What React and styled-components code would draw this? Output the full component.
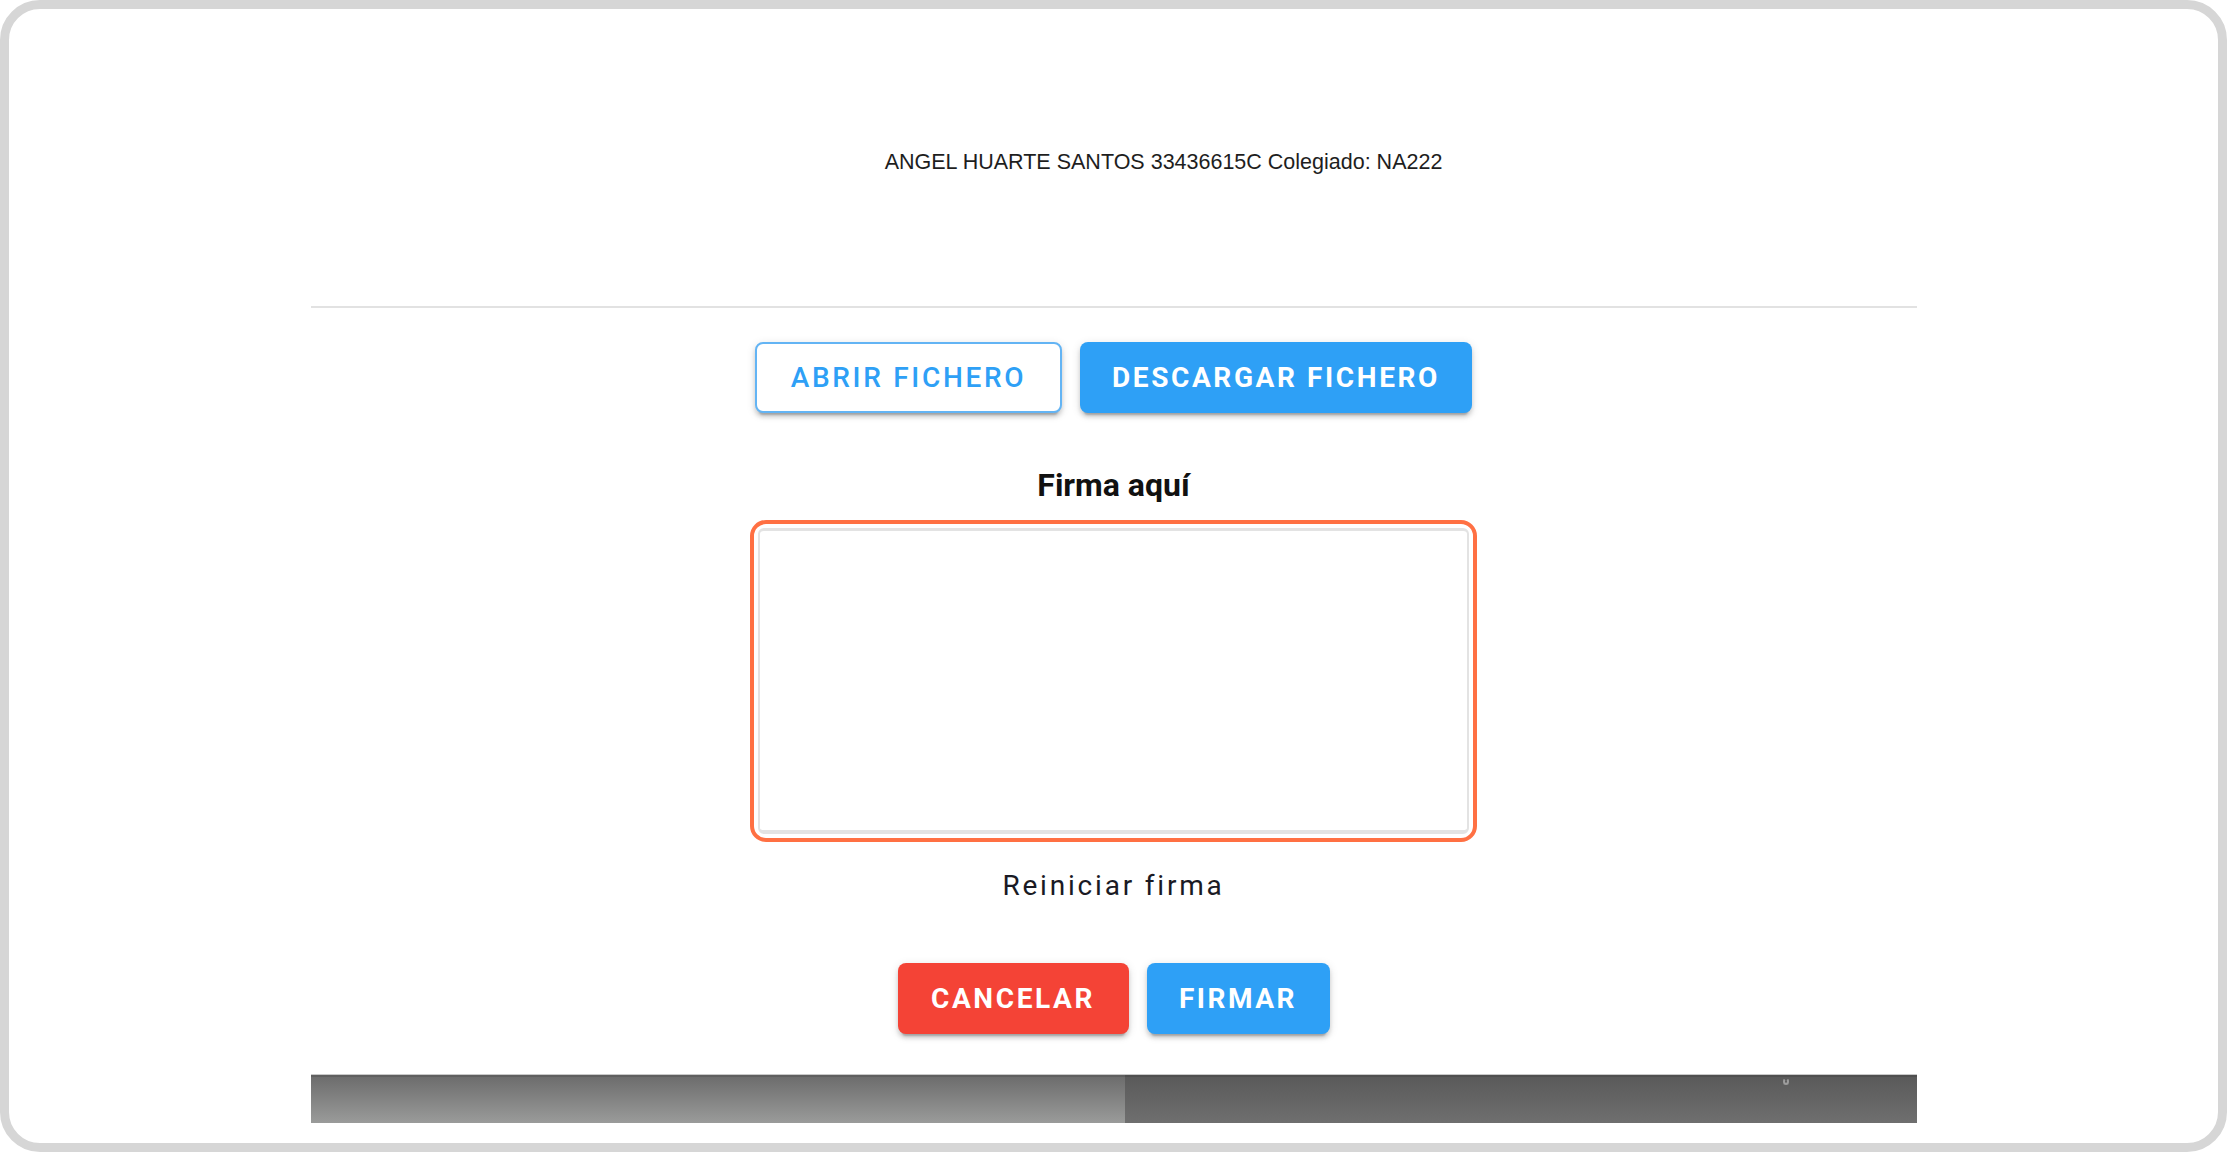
import styled, { createGlobalStyle, css } from 'styled-components'

const GlobalStyle = createGlobalStyle`
  html, body {
    margin: 0;
    padding: 0;
    background: #ffffff;
  }
  * {
    box-sizing: border-box;
  }
`

const Frame = styled('main')`
  height: 1152px;
  width: 2227px;
  border: 9px solid #d6d6d6;
  border-radius: 40px;
  background: #ffffff;
  overflow: hidden;
  display: flex;
  justify-content: center;
`

const Column = styled('section')`
  width: 1606px;
  display: flex;
  flex-direction: column;
  align-items: center;
`

const DocHeader = styled('header')`
  width: 100%;
  height: 299px;
  padding-top: 141px;
  padding-left: 100px;
  border-bottom: 2px solid #e2e2e2;
  text-align: center;
  font-family: 'Liberation Sans', Arial, sans-serif;
  font-size: 21.5px;
  line-height: 24px;
  color: #1e1e1e;
`

const ButtonRow = styled('div')`
  display: flex;
  justify-content: center;
  gap: 18px;
  margin-top: ${(p) => p.$top}px;
`

const palette = {
  blue: '#2ea0f6',
  red: '#f44336',
}

const Button = styled('button')`
  width: ${(p) => p.$width}px;
  height: 71px;
  padding: 0;
  border-radius: 8px;
  font-family: Roboto, 'Noto Sans', sans-serif;
  font-size: 28px;
  font-weight: ${(p) => p.$weight || 700};
  letter-spacing: ${(p) => p.$spacing || 2.4}px;
  text-transform: uppercase;
  cursor: pointer;
  box-shadow: 0 6px 2px -4px rgba(0, 0, 0, 0.2), 0 4px 4px 0 rgba(0, 0, 0, 0.14),
    0 2px 10px 0 rgba(0, 0, 0, 0.12);

  ${(p) =>
    p.$variant === 'outlined'
      ? css`
          background: #ffffff;
          color: ${palette.blue};
          border: 2px solid #63b4f4;
        `
      : css`
          background: ${palette[p.$color || 'blue']};
          color: #ffffff;
          border: none;
        `}
`

const SignTitle = styled('h2')`
  margin: 52px 0 0;
  font-family: Roboto, 'Noto Sans', sans-serif;
  font-size: 32px;
  line-height: 40px;
  font-weight: 700;
  color: #111111;
`

const SignBox = styled('div')`
  margin-top: 15px;
  width: 727px;
  height: 322px;
  padding: 4px;
  border: 4px solid #ff7043;
  border-radius: 16px;
  background: #ffffff;
`

const SignCanvas = styled('div')`
  width: 100%;
  height: 100%;
  border: 2px solid #e3e3e3;
  border-bottom-width: 4px;
  border-top-width: 3px;
  border-radius: 6px;
  background: #ffffff;
`

const ResetButton = styled('button')`
  margin-top: 13px;
  height: 61px;
  padding: 0 16px;
  border: none;
  background: transparent;
  font-family: Roboto, 'Noto Sans', sans-serif;
  font-size: 28px;
  font-weight: 400;
  letter-spacing: 2.8px;
  color: #1a1a24;
  cursor: pointer;
`

const Viewer = styled('div')`
  margin-top: 40px;
  width: 100%;
  height: 49px;
  display: flex;
  border-top: 1px solid #c9c9c9;
`

const ViewerPane = styled('div')`
  position: relative;
  height: 100%;
  flex: ${(p) => p.$flex};
  border-top: 2px solid ${(p) => (p.$dark ? '#4f4f4f' : '#5f5f5f')};
  background: ${(p) =>
    p.$dark
      ? 'linear-gradient(#5a5a5a, #6f6f6f)'
      : 'linear-gradient(#6d6d6d, #9a9b9a)'};
`

const Mark = styled('span')`
  position: absolute;
  top: 1px;
  right: 128px;
  width: 6px;
  height: 7px;
  border: 2px solid #9d9d9d;
  border-top-color: transparent;
  border-radius: 50%;
`

const App = function App() {
  return (
    <>
      <GlobalStyle />
      <Frame>
        <Column>
          <DocHeader>ANGEL HUARTE SANTOS 33436615C Colegiado: NA222</DocHeader>

          <ButtonRow $top={34}>
            <Button $variant='outlined' $weight={500} $spacing={2.7} $width={307}>
              Abrir fichero
            </Button>
            <Button $weight={700} $spacing={2.6} $width={392}>
              Descargar fichero
            </Button>
          </ButtonRow>

          <SignTitle>Firma aquí</SignTitle>
          <SignBox>
            <SignCanvas />
          </SignBox>

          <ResetButton type='button'>Reiniciar firma</ResetButton>

          <ButtonRow $top={47}>
            <Button $color='red' $spacing={2.6} $width={231}>
              Cancelar
            </Button>
            <Button $spacing={2.5} $width={183}>
              Firmar
            </Button>
          </ButtonRow>

          <Viewer>
            <ViewerPane $flex='0 0 814px' />
            <ViewerPane $flex='1' $dark>
              <Mark />
            </ViewerPane>
          </Viewer>
        </Column>
      </Frame>
    </>
  )
}

export default App
